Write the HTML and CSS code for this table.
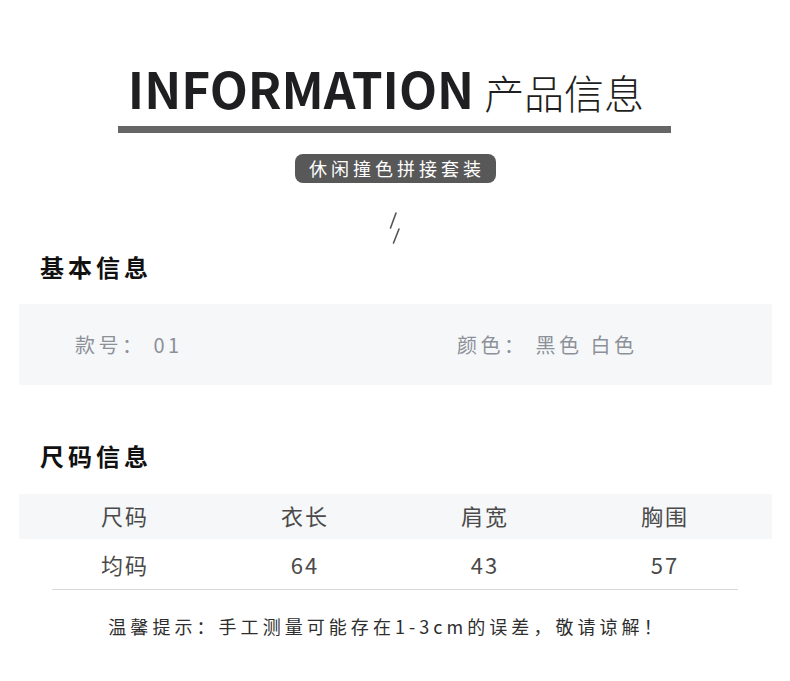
FILE: index.html
```html
<!DOCTYPE html>
<html lang="zh">
<head>
<meta charset="utf-8">
<link rel="stylesheet" href="styles.css">
</head>
<body>
<div class="page">
  <header class="hero">
    <h1 class="title"><span class="title-en">INFORMATION</span><span class="title-cn">产品信息</span></h1>
    <div class="bar"></div>
    <div class="pill">休闲撞色拼接套装</div>
    <svg class="slashes" width="20" height="36" viewBox="0 0 20 36">
      <line x1="11" y1="3" x2="5.5" y2="18" stroke="#555" stroke-width="1.6" stroke-linecap="round"/>
      <line x1="14" y1="19" x2="8.5" y2="33" stroke="#555" stroke-width="1.6" stroke-linecap="round"/>
    </svg>
  </header>

  <section class="section basic">
    <h2 class="sec-title">基本信息</h2>
    <div class="info-box">
      <div class="info-item">款号：&nbsp;01</div>
      <div class="info-item">颜色：&nbsp;黑色 白色</div>
    </div>
  </section>

  <section class="section size">
    <h2 class="sec-title">尺码信息</h2>
    <div class="size-table">
      <div class="row head">
        <div class="cell">尺码</div>
        <div class="cell">衣长</div>
        <div class="cell">肩宽</div>
        <div class="cell">胸围</div>
      </div>
      <div class="row data">
        <div class="cell">均码</div>
        <div class="cell">64</div>
        <div class="cell">43</div>
        <div class="cell">57</div>
      </div>
      <div class="rule"></div>
    </div>
  </section>

  <p class="note">温馨提示：手工测量可能存在1-3cm的误差，敬请谅解！</p>
</div>
</body>
</html>
```

FILE: styles.css
```css
* { box-sizing: border-box; margin: 0; padding: 0; }
html, body { background: #fff; }
body {
  font-family: "Noto Sans CJK SC", "Noto Sans", sans-serif;
  color: #222;
}
.page {
  width: 790px;
  height: 681px;
  overflow: hidden;
}
.hero {
  display: flex;
  flex-direction: column;
  align-items: center;
  padding-top: 63px;
}
.title {
  display: flex;
  align-items: baseline;
  line-height: 1;
  font-weight: 400;
  margin-left: -18px;
}
.title-en {
  font-size: 49.5px;
  font-weight: 700;
  color: #1f1f21;
  letter-spacing: 0;
}
.title-cn {
  font-size: 40px;
  font-weight: 300;
  color: #1f1f21;
  margin-left: 10px;
}
.bar {
  width: 553px;
  height: 7px;
  background: #666666;
  margin-top: 13px;
  margin-left: -2px;
}
.pill {
  margin-top: 21px;
  width: 201px;
  height: 29px;
  border-radius: 8px;
  background: #585858;
  color: #fff;
  font-size: 18px;
  line-height: 29px;
  letter-spacing: 4px;
  text-align: center;
  padding-left: 4px;
}
.slashes {
  display: block;
  margin-top: 27px;
}
.section { padding: 0 18px 0 19px; }
.sec-title {
  font-size: 24px;
  font-weight: 700;
  letter-spacing: 4px;
  line-height: 32px;
  color: #111;
  padding-left: 21px;
}
.basic .sec-title { margin-top: 5px; }
.info-box {
  margin-top: 21px;
  height: 81px;
  background: #f6f7f9;
  display: grid;
  grid-template-columns: 382px 1fr;
  align-items: center;
  padding-left: 56px;
}
.info-item {
  font-size: 20px;
  letter-spacing: 3.5px;
  color: #8c9098;
}
.size .sec-title { margin-top: 55px; }
.size-table { margin-top: 22px; }
.row {
  display: grid;
  grid-template-columns: repeat(4, 180px);
  padding-left: 16px;
  align-items: center;
}
.row.head {
  height: 45px;
  background: #f6f7f9;
}
.row.head .cell { padding-bottom: 3px; }
.row.data { height: 50px; }
.cell {
  text-align: center;
  font-size: 22px;
  letter-spacing: 2px;
  color: #4a4a4a;
}
.rule {
  height: 1px;
  background: #d9d9d9;
  margin: 0 34px 0 33px;
}
.note {
  margin-top: 23px;
  text-align: center;
  font-size: 18px;
  letter-spacing: 4.05px;
  color: #2e2e2e;
  line-height: 26px;
  padding-right: 16px;
}
```
